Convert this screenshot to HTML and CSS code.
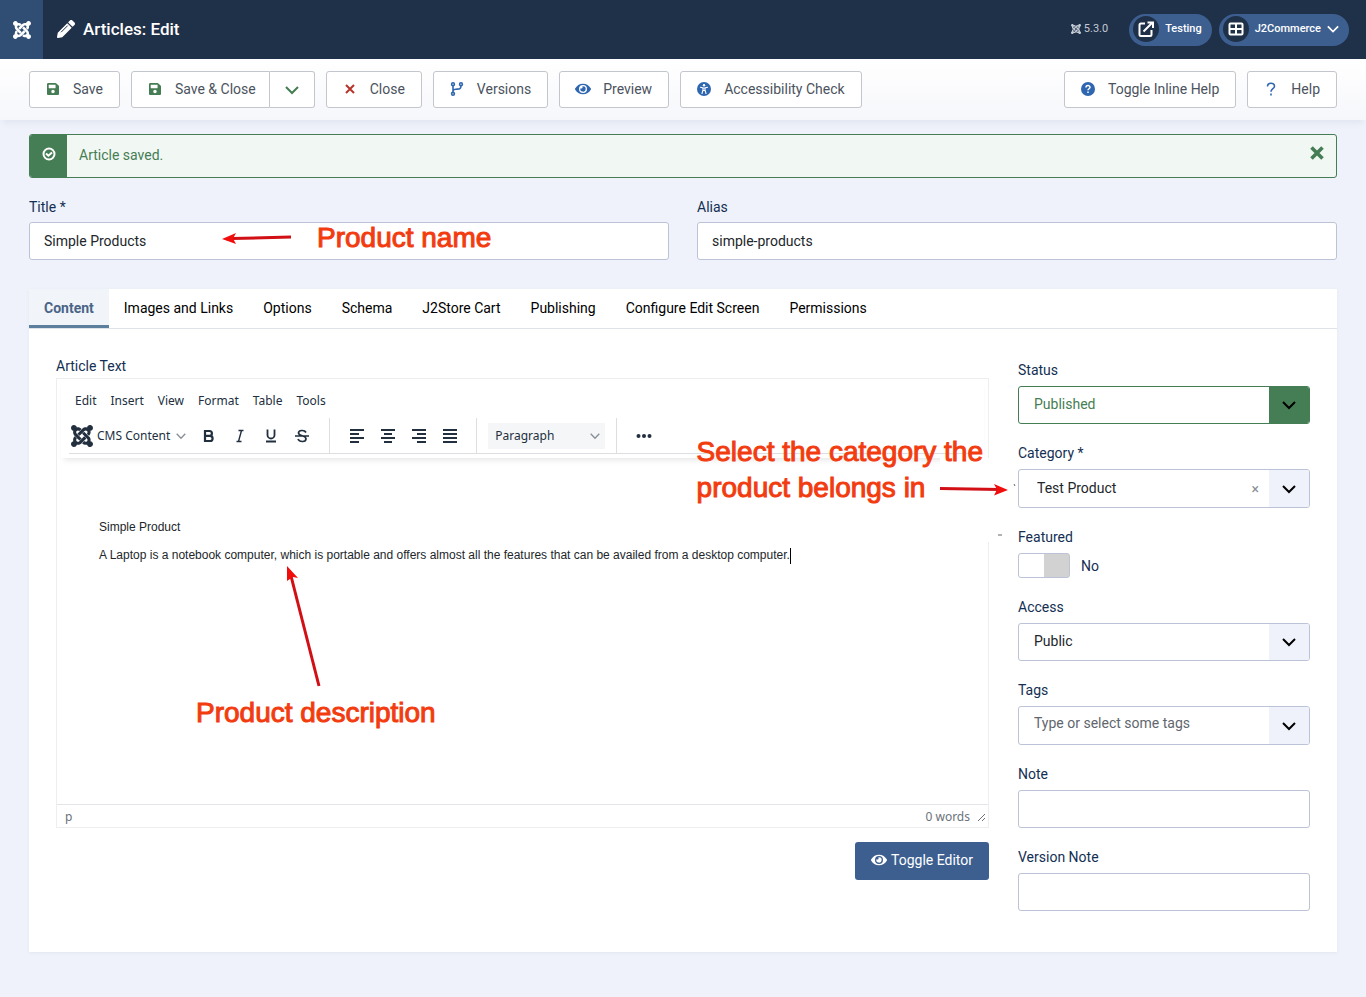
FILE: index.html
```html
<!DOCTYPE html>
<html lang="en">
<head>
<meta charset="utf-8">
<meta name="viewport" content="width=device-width, initial-scale=1">
<title>Articles: Edit</title>
<link rel="stylesheet" href="styles.css">
</head>
<body>
<svg class="sprite" aria-hidden="true">
  <symbol id="joomla" viewBox="0 32 448 448"><path d="M.6 92.1C.6 58.8 27.4 32 60.4 32c30 0 54.5 21.9 59.2 50.2 32.6-7.6 67.1.6 96.5 30l-44.3 44.3c-20.5-20.5-42.6-16.3-55.4-3.5-14.3 14.3-14.3 37.9 0 52.2l99.5 99.5-44 44.3c-87.7-87.2-49.7-49.7-99.8-99.7-26.8-26.5-35-64.8-24.8-98.9C20.4 144.6.6 120.7.6 92.1zm129.5 116.4l44.3 44.3c10-10 89.7-89.7 99.7-99.8 14.3-14.3 37.6-14.3 51.9 0 12.8 12.8 17 35-3.5 55.4l44 44.3c31.2-31.2 38.5-67.6 28.9-101.2 29.2-4.1 51.9-29.2 51.9-59.5 0-33.2-26.8-60.1-59.8-60.1-30.3 0-55.4 22.5-59.5 51.6-33.8-9.9-71.7-1.5-98.3 25.1-18.3 19.1-71.1 71.5-99.6 99.9zm266.3 152.2c8.2-32.7-.9-68.5-26.3-93.9-11.8-12.2 5 4.7-99.5-99.7l-44.3 44.3 99.7 99.7c14.3 14.3 14.3 37.6 0 51.9-12.8 12.8-35 17-55.4-3.5l-44 44.3c27.6 30.2 68 38.8 102.7 28 5.5 27.4 29.7 48.1 58.9 48.1 33 0 59.8-26.8 59.8-60.1 0-30.2-22.5-55-51.6-59.1zm-84.3-53.1l-44-44.3c-87 86.4-50.4 50.4-99.7 99.8-14.3 14.3-37.6 14.3-51.9 0-13.1-13.4-16.9-35.3 3.2-55.4l-44-44.3c-30.2 30.2-38 65.2-29.5 98.3-26.7 6-46.2 29.9-46.2 58.2C0 453.2 26.8 480 59.8 480c28.6 0 52.5-19.8 58.6-46.7 32.7 8.2 68.5-.6 94.2-26 32.1-32 12.2-12.4 99.5-99.7z"/></symbol>
  <symbol id="eye" viewBox="0 0 576 512"><path d="M572.52 241.4C518.29 135.59 410.93 64 288 64S57.68 135.64 3.48 241.41a32.35 32.35 0 0 0 0 29.19C57.71 376.41 165.07 448 288 448s230.32-71.64 284.52-177.41a32.35 32.35 0 0 0 0-29.19zM288 400a144 144 0 1 1 144-144 143.93 143.93 0 0 1-144 144zm0-240a95.31 95.31 0 0 0-25.31 3.79 47.85 47.85 0 0 1-66.9 66.9A95.78 95.78 0 1 0 288 160z"/></symbol>
  <symbol id="save" viewBox="0 32 448 448"><path d="M433.941 129.941l-83.882-83.882A48 48 0 0 0 316.118 32H48C21.49 32 0 53.49 0 80v352c0 26.51 21.49 48 48 48h352c26.51 0 48-21.49 48-48V163.882a48 48 0 0 0-14.059-33.941zM224 416c-35.346 0-64-28.654-64-64 0-35.346 28.654-64 64-64s64 28.654 64 64c0 35.346-28.654 64-64 64zm96-304.52V212c0 6.627-5.373 12-12 12H76c-6.627 0-12-5.373-12-12V108c0-6.627 5.373-12 12-12h228.52c3.183 0 6.235 1.264 8.485 3.515l3.48 3.48A11.996 11.996 0 0 1 320 111.48z"/></symbol>
  <symbol id="pencil" viewBox="0 0 512 512"><path d="M497.9 142.1l-46.1 46.1c-4.7 4.7-12.3 4.7-17 0l-111-111c-4.7-4.7-4.7-12.3 0-17l46.1-46.1c18.7-18.7 49.1-18.7 67.9 0l60.1 60.1c18.8 18.7 18.8 49.1 0 67.9zM284.2 99.8L21.6 362.4.4 483.9c-2.9 16.4 11.4 30.6 27.8 27.8l121.5-21.3 262.6-262.6c4.7-4.7 4.7-12.3 0-17l-111-111c-4.8-4.7-12.4-4.7-17.1 0z"/><path d="M124 340L298 166" stroke="#1f3049" stroke-width="28" stroke-linecap="round"/></symbol>
  <symbol id="chevron" viewBox="0 0 14 14"><path d="M1 4l6 6 6-6" fill="none" stroke="currentColor" stroke-width="2"/></symbol>
</svg>

<header class="topbar">
  <a class="logo" href="#" aria-label="Dashboard"><svg class="i18"><use href="#joomla"/></svg></a>
  <h1 class="page-title"><svg class="i18"><use href="#pencil"/></svg>Articles: Edit</h1>
  <div class="top-status">
    <span class="version"><svg class="i10"><use href="#joomla"/></svg>5.3.0</span>
    <a class="pill" href="#"><span class="pill-icon"><svg class="i16" viewBox="0 0 16 16" fill="none" stroke="currentColor" stroke-width="2"><path d="M7 2.500H3A1.500 1.500 0 0 0 1.500 4v9.500A1.500 1.500 0 0 0 3 15h9a1.500 1.500 0 0 0 1.500-1.500V9M5.500 10.500L14 2M9.500 1.500H15V7"/></svg></span>Testing</a>
    <button class="pill" type="button"><span class="pill-icon"><svg class="i16" viewBox="0 0 16 16" fill="none" stroke="currentColor" stroke-width="2"><rect x="1.500" y="2.500" width="13" height="11" rx="1"/><path d="M8 3v10M2 8h12"/></svg></span>J2Commerce<svg class="i12"><use href="#chevron"/></svg></button>
  </div>
</header>

<nav class="toolbar" aria-label="Toolbar">
  <button class="btn" type="button"><span class="slot green"><svg class="i12"><use href="#save"/></svg></span>Save</button>
  <div class="btn-group">
    <button class="btn" type="button"><span class="slot green"><svg class="i12"><use href="#save"/></svg></span>Save &amp; Close</button>
    <button class="btn btn-drop" type="button" aria-label="More save options"><svg class="i14"><use href="#chevron"/></svg></button>
  </div>
  <button class="btn" type="button"><span class="slot red"><svg class="i12" viewBox="0 0 12 12" fill="none" stroke="currentColor" stroke-width="2"><path d="M2 2l8 8M10 2l-8 8"/></svg></span>Close</button>
  <button class="btn" type="button"><span class="slot blue"><svg class="i14" viewBox="0 0 14 14" fill="none" stroke="currentColor" stroke-width="1.600"><circle cx="3" cy="2.200" r="1.400"/><circle cx="3" cy="11.800" r="1.400"/><circle cx="11" cy="2.200" r="1.400"/><path d="M3 3.600v6.800M11 3.600C11 7.500 9 7 6 7.200 4 7.300 3 8 3 9"/></svg></span>Versions</button>
  <button class="btn" type="button"><span class="slot blue"><svg class="i16"><use href="#eye"/></svg></span>Preview</button>
  <button class="btn" type="button"><span class="slot blue"><svg class="i14" viewBox="0 0 14 14"><circle cx="7" cy="7" r="7"/><circle cx="7" cy="3.300" r="1.200" fill="#fff"/><path d="M3.500 5.200L6 6v2l-1 3.500M10.500 5.200L8 6v2l1 3.500M6 6h2v2.500H6z" fill="none" stroke="#fff" stroke-width="1.100" stroke-linecap="round"/></svg></span>Accessibility Check</button>
  <span class="spacer"></span>
  <button class="btn" type="button"><span class="slot blue"><svg class="i14" viewBox="0 0 14 14"><circle cx="7" cy="7" r="7"/><path d="M5 5.500C5 3 9 3 9 5.300 9 6.800 7 6.700 7 8.300M7 9.500v1.600" fill="none" stroke="#fff" stroke-width="1.500"/></svg></span>Toggle Inline Help</button>
  <button class="btn" type="button"><span class="slot blue"><svg class="i14" viewBox="0 0 14 14"><path d="M3.500 4.500C3.500 .200 10.500 .200 10.500 4.200 10.500 6.800 7 6.600 7 9.800M7 11.500v2" fill="none" stroke="currentColor" stroke-width="1.600"/></svg></span>Help</button>
</nav>

<main class="page">
  <div class="alert" role="alert">
    <span class="alert-icon"><svg class="i14" viewBox="0 0 14 14" fill="none" stroke="currentColor" stroke-width="2"><circle cx="7" cy="7" r="5.500"/><path d="M4 6.500l2.400 2.200L10 5.400"/></svg></span>
    <p class="alert-text">Article saved.</p>
    <button class="alert-close" type="button" aria-label="Close"><svg class="i14" viewBox="0 0 14 14" fill="none" stroke="currentColor" stroke-width="3.600"><path d="M1.500 1.500l11 11M12.500 1.500l-11 11"/></svg></button>
  </div>

  <div class="title-row">
    <div class="field">
      <label for="title">Title *</label>
      <input class="control" id="title" type="text" value="Simple Products">
      <div class="note note-title">
        <svg width="70" height="14" viewBox="0 0 70 14"><path d="M10 7.500L69 6" stroke="#d10f14" stroke-width="3"/><path d="M0 8L14 2l-3 5.500 3 5.500z" fill="#f20d0d"/></svg>
        <span>Product name</span>
      </div>
    </div>
    <div class="field">
      <label for="alias">Alias</label>
      <input class="control" id="alias" type="text" value="simple-products">
    </div>
  </div>

  <section class="card">
    <div class="tabs" role="tablist">
      <button class="tab tab-active" role="tab" aria-selected="true" type="button">Content</button>
      <button class="tab" role="tab" type="button">Images and Links</button>
      <button class="tab" role="tab" type="button">Options</button>
      <button class="tab" role="tab" type="button">Schema</button>
      <button class="tab" role="tab" type="button">J2Store Cart</button>
      <button class="tab" role="tab" type="button">Publishing</button>
      <button class="tab" role="tab" type="button">Configure Edit Screen</button>
      <button class="tab" role="tab" type="button">Permissions</button>
    </div>

    <div class="panel">
      <div class="editor-col">
        <span class="editor-label" id="text-label">Article Text</span>
        <div class="editor">
          <div class="editor-head">
            <div class="menubar">
              <button type="button">Edit</button><button type="button">Insert</button><button type="button">View</button><button type="button">Format</button><button type="button">Table</button><button type="button">Tools</button>
            </div>
            <div class="tools">
              <div class="tool-group group-text">
                <button class="cms" type="button"><svg class="i22"><use href="#joomla"/></svg>CMS Content<svg class="i10 gray"><use href="#chevron"/></svg></button>
                <button class="tool" type="button" aria-label="Bold"><svg class="i16" viewBox="0 0 16 16" fill="none" stroke="currentColor" stroke-width="2.200"><path d="M4 3h4.500a2.400 2.400 0 0 1 0 4.800H4zM4 7.800h5a2.600 2.600 0 0 1 0 5.200H4z"/></svg></button>
                <button class="tool" type="button" aria-label="Italic"><svg class="i16" viewBox="0 0 16 16" fill="none" stroke="currentColor" stroke-width="1.400"><path d="M6.500 2.500h5M4.500 13.500h5M9.500 2.500l-3 11"/></svg></button>
                <button class="tool" type="button" aria-label="Underline"><svg class="i16" viewBox="0 0 16 16" fill="none" stroke="currentColor" stroke-width="1.800"><path d="M4.500 1.500v5.500a3.500 3.500 0 0 0 7 0V1.500M3 13.500h10"/></svg></button>
                <button class="tool" type="button" aria-label="Strikethrough"><svg class="i16" viewBox="0 0 16 16" fill="none" stroke="currentColor" stroke-width="1.700"><path d="M1 8h14M12 4.500C10.500 1.500 4.500 2 4.500 5 4.500 8 12 7.500 12 10.700c0 3.500-6.500 3.800-8 .3"/></svg></button>
              </div>
              <div class="tool-group">
                <button class="tool" type="button" aria-label="Align left"><svg class="i16" viewBox="0 0 16 16" stroke="currentColor" stroke-width="2"><path d="M1 2h14M1 6h9M1 10h14M1 14h9"/></svg></button>
                <button class="tool" type="button" aria-label="Align center"><svg class="i16" viewBox="0 0 16 16" stroke="currentColor" stroke-width="2"><path d="M1 2h14M4 6h8M1 10h14M4 14h8"/></svg></button>
                <button class="tool" type="button" aria-label="Align right"><svg class="i16" viewBox="0 0 16 16" stroke="currentColor" stroke-width="2"><path d="M1 2h14M6 6h9M1 10h14M6 14h9"/></svg></button>
                <button class="tool" type="button" aria-label="Justify"><svg class="i16" viewBox="0 0 16 16" stroke="currentColor" stroke-width="2"><path d="M1 2h14M1 6h14M1 10h14M1 14h14"/></svg></button>
              </div>
              <div class="tool-group">
                <button class="format" type="button">Paragraph<svg class="i10 gray"><use href="#chevron"/></svg></button>
              </div>
              <div class="tool-group">
                <button class="tool" type="button" aria-label="More"><svg class="i16" viewBox="0 0 16 16"><circle cx="2.500" cy="8" r="2"/><circle cx="8" cy="8" r="2"/><circle cx="13.500" cy="8" r="2"/></svg></button>
              </div>
            </div>
          </div>
          <div class="editor-body">
            <div class="prose" contenteditable="true" role="textbox" aria-labelledby="text-label">
              <p>Simple Product</p>
              <p>A Laptop is a notebook computer, which is portable and offers almost all the features that can be availed from a desktop computer.<span class="caret"></span></p>
            </div>
            <div class="note note-desc">
              <svg width="36" height="122" viewBox="0 0 36 122"><path d="M5 10l28 110" stroke="#d10f14" stroke-width="3"/><path d="M1 0l11 12-5-1-6 4z" fill="#f20d0d"/></svg>
              <span>Product description</span>
            </div>
          </div>
          <div class="editor-foot"><span>p</span><span class="words">0 words<svg class="i10" viewBox="0 0 10 10" fill="none" stroke="currentColor"><path d="M2 9l7-7M6 9l3-3"/></svg></span></div>
        </div>
        <button class="toggle-editor" type="button"><svg class="i16"><use href="#eye"/></svg>Toggle Editor</button>
      </div>

      <aside class="side">
        <div class="field">
          <label for="status">Status</label>
          <div class="select select-green"><select class="control" id="status"><option>Published</option></select><span class="arrow"><svg class="i14"><use href="#chevron"/></svg></span></div>
        </div>
        <div class="field">
          <label for="category">Category *</label>
          <div class="select select-tall"><select class="control category" id="category"><option>Test Product</option></select><button class="clear" type="button" aria-label="Remove">×</button><span class="arrow"><svg class="i14"><use href="#chevron"/></svg></span></div>
          <div class="note note-category">
            <svg width="77" height="84" viewBox="0 0 77 84"><path d="M0 0h77v84H0z" fill="#fff"/><path d="M0 30.500l60 1" stroke="#d10f14" stroke-width="3"/><path d="M68 32l-14-6 3 5.500-3 6z" fill="#f20d0d"/><path d="M58 77h4M74 26l1 2" stroke="#666"/></svg>
            <span>Select the category the<br>product belongs in</span>
          </div>
        </div>
        <div class="field">
          <label for="featured">Featured</label>
          <div class="switch-row"><input class="switch" id="featured" type="checkbox" role="switch"><span>No</span></div>
        </div>
        <div class="field">
          <label for="access">Access</label>
          <div class="select"><select class="control" id="access"><option>Public</option></select><span class="arrow"><svg class="i14"><use href="#chevron"/></svg></span></div>
        </div>
        <div class="field">
          <label for="tags">Tags</label>
          <div class="select select-tall"><input class="control tags" id="tags" type="text" placeholder="Type or select some tags"><span class="arrow"><svg class="i14"><use href="#chevron"/></svg></span></div>
        </div>
        <div class="field">
          <label for="note">Note</label>
          <input class="control" id="note" type="text">
        </div>
        <div class="field">
          <label for="version-note">Version Note</label>
          <input class="control" id="version-note" type="text">
        </div>
      </aside>
    </div>
  </section>
</main>
</body>
</html>
```
FILE: styles.css
```css
* { box-sizing: border-box; }
body {
  margin: 0;
  background: #eff2fa;
  color: #132f53;
  font: 14px/20px Roboto, sans-serif;
}
button, input, select { font: inherit; color: inherit; margin: 0; }
button { background: none; border: 0; padding: 0; }
a { color: inherit; text-decoration: none; }
p { margin: 0; }
svg { fill: currentColor; flex: none; display: block; }
svg[fill="none"] { fill: none; }
.sprite { position: absolute; width: 0; height: 0; }
.i10 { width: 10px; height: 10px; }
.i12 { width: 12px; height: 12px; }
.i14 { width: 14px; height: 14px; }
.i16 { width: 16px; height: 16px; }
.i18 { width: 18px; height: 18px; }
.i22 { width: 22px; height: 22px; }
.green { color: #457d54; }
.red { color: #b8342b; }
.blue { color: #2f66b0; }
.gray { color: #8a9099; }

.topbar {
  display: flex;
  align-items: center;
  height: 59px;
  padding-right: 17px;
  background: #1f3049;
  color: #fff;
}
.logo {
  display: grid;
  place-items: center;
  align-self: stretch;
  width: 43px;
  background: #304d74;
}
.page-title {
  display: flex;
  align-items: center;
  gap: 8px;
  margin: 0;
  padding: 0 0 2px 14px;
  font-size: 17px;
  font-weight: 500;
}
.top-status { display: flex; align-items: center; gap: 7px; margin-left: auto; font-size: 11px; }
.version { display: flex; align-items: center; gap: 3px; margin-right: 14px; padding-bottom: 2px; color: #c3cad4; }
.pill {
  display: flex;
  align-items: center;
  gap: 6px;
  height: 32px;
  padding: 0 10px 2px 4px;
  border-radius: 16px;
  background: #3d5f90;
  font-weight: 500;
}
.pill-icon {
  display: grid;
  place-items: center;
  width: 26px;
  height: 26px;
  border-radius: 50%;
  background: #1f3049;
}

.toolbar {
  display: flex;
  gap: 11px;
  padding: 12px 29px;
  background: linear-gradient(#fff, #f6f7fb);
  box-shadow: 0 6px 6px -3px #e0e5f1;
}
.spacer { flex: 1; margin-left: -11px; }
.btn {
  display: flex;
  align-items: center;
  gap: 12px;
  height: 37px;
  padding: 0 16px 2px 15px;
  border: 1px solid #c3c6cc;
  border-radius: 3px;
  background: #fff;
  color: #4b535e;
  white-space: nowrap;
}
.slot { display: grid; place-items: center; width: 16px; }
.btn-group { display: flex; }
.btn-group .btn:first-child { border-radius: 3px 0 0 3px; padding-right: 13px; }
.btn-group .btn-drop { border-left: 0; border-radius: 0 3px 3px 0; padding: 0 15px; color: #457d54; }

.page { padding: 14px 29px 45px; }
.alert {
  display: flex;
  height: 44px;
  border: 1px solid #457d54;
  border-radius: 3px;
  background: #f1f7f3;
  color: #457d54;
  overflow: hidden;
}
.alert-icon { display: grid; justify-items: center; width: 37px; padding-top: 12px; background: #457d54; color: #fff; }
.alert-text { flex: 1; padding: 10px 12px; }
.alert-close { align-self: flex-start; padding: 11px 12px; }

.field { position: relative; }
.field label { display: block; margin-bottom: 6px; }
.control {
  display: block;
  width: 100%;
  height: 38px;
  padding: 0 14px;
  border: 1px solid #bcc3d6;
  border-radius: 3px;
  background: #fff;
  color: #22262a;
}
.title-row {
  display: grid;
  grid-template-columns: 1fr 1fr;
  gap: 28px;
  margin: 19px 0 29px;
}
.title-row label { margin-bottom: 5px; }

.card { background: #fff; box-shadow: 0 1px 3px #e2e6f2; }
.tabs { display: flex; border-bottom: 1px solid #dfe2e8; }
.tab {
  height: 39px;
  padding: 2px 15px 0;
  color: #000;
  border-bottom: 3px solid transparent;
}
.tab-active { background: #f1f5fa; color: #4a6487; border-color: #5b7f9c; font-weight: 700; }
.panel {
  display: grid;
  grid-template-columns: 1fr 292px;
  gap: 29px;
  padding: 27px 27px 41px;
}
.editor-col { display: flex; flex-direction: column; }
.editor-label { margin-bottom: 2px; }
.editor { display: flex; flex-direction: column; height: 450px; border: 1px solid #eceef0; font-family: "Noto Sans", sans-serif; font-size: 12px; color: #222f3e; }
.editor-head { margin: 0 4px; padding: 8px 0 4px; box-shadow: 0 5px 6px -3px #e6e6e8; }
.menubar { display: flex; gap: 14px; padding: 4px 14px 7px; }
.tools { display: flex; margin: 0 8px; border-bottom: 1px solid #dcdee1; }
.tool-group { display: flex; align-items: center; height: 35px; padding: 0 11px; border-left: 1px solid #dcdee1; }
.group-text { padding: 0 12px 0 2px; border-left: 0; }
.tool { display: grid; place-items: center; width: 31px; height: 28px; }
.cms { display: flex; align-items: center; gap: 4px; padding-right: 7px; }
.cms .gray { margin-left: 2px; }
.format {
  display: flex;
  align-items: center;
  justify-content: space-between;
  width: 117px;
  height: 26px;
  padding: 0 5px 0 7px;
  background: #f5f6f7;
}
.editor-body { position: relative; flex: 1; padding: 61px 42px; }
.prose { outline: 0; font: 12px/16px "Liberation Sans", Arial, sans-serif; color: #22262a; }
.prose p { margin-bottom: 12px; }
.caret { display: inline-block; height: 16px; border-left: 1px solid #000; vertical-align: middle; }
.editor-foot { display: flex; justify-content: space-between; padding: 2px 2px 0 8px; height: 23px; border-top: 1px solid #e3e5e8; color: #6b727b; }
.words { display: flex; align-items: center; gap: 6px; }
.toggle-editor {
  display: flex;
  align-items: center;
  align-self: flex-end;
  gap: 4px;
  height: 38px;
  margin-top: 14px;
  padding: 0 16px 2px;
  border-radius: 3px;
  background: #3d5f90;
  color: #fff;
}

.side { display: flex; flex-direction: column; gap: 19px; padding-top: 4px; }
.select { display: grid; grid-template-columns: 1fr 41px; align-items: center; }
.select .control { grid-area: 1 / 1 / 2 / 3; appearance: none; padding: 0 44px 2px 15px; }
.select .arrow {
  grid-area: 1 / 2;
  display: grid;
  place-items: center;
  height: 36px;
  margin-right: 1px;
  border-radius: 0 2px 2px 0;
  background: #eff2fa;
  color: #000;
  pointer-events: none;
}
.select-tall .control { height: 39px; }
.select-tall .arrow { height: 37px; }
.select .category { padding-left: 18px; }
.select .tags { padding-bottom: 6px; }
.tags::placeholder { color: #5f666e; }
.select-green .control { border-color: #457d54; color: #457d54; }
.select-green .arrow { background: #457d54; }
.clear { grid-area: 1 / 1; justify-self: end; margin-right: 10px; color: #8a8f96; }
.switch-row { display: flex; align-items: center; gap: 11px; }
.switch {
  appearance: none;
  width: 52px;
  height: 25px;
  border: 1px solid #bcc3d6;
  border-radius: 3px;
  background: linear-gradient(90deg, #fff 50%, #d2d2d2 50%);
}

.note {
  position: absolute;
  color: #f23c10;
  font: 28px/36px "Liberation Sans", Arial, sans-serif;
  -webkit-text-stroke: 1px #f23c10;
  white-space: nowrap;
  pointer-events: none;
}
.note-title { display: flex; align-items: center; gap: 25px; left: 193px; bottom: 4px; }
.note-desc { left: 139px; top: 108px; }
.note-desc svg { margin-left: 90px; }
.note-desc span { display: block; margin-top: 7px; }
.note-category { display: grid; right: 293px; top: -9px; }
.note-category svg { grid-area: 1 / 1; justify-self: end; margin-top: 24px; }
.note-category span { grid-area: 1 / 1; margin-right: 34px; }
```
